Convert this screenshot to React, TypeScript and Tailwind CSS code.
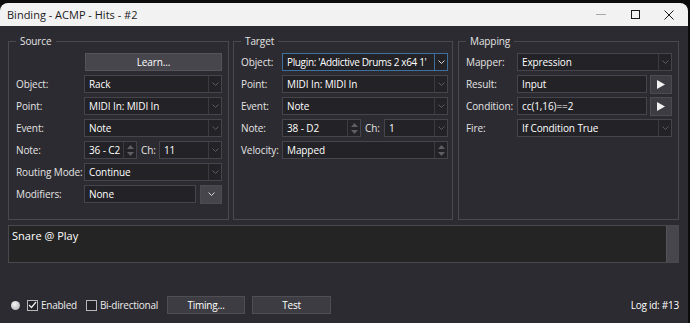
import React from "react";

const font = { fontFamily: '"Open Sans", "Noto Sans", sans-serif' };

function Chevron({ bright = false }: { bright?: boolean }) {
  return (
    <svg width="7" height="4" viewBox="0 0 7 4" className="block">
      <polyline
        points="0.5,0.5 3.5,3.5 6.5,0.5"
        fill="none"
        stroke={bright ? "#d8d8d8" : "#5c5b61"}
        strokeWidth="1"
      />
    </svg>
  );
}

function Spin() {
  return (
    <div className="flex h-full w-[13px] shrink-0 flex-col items-center justify-center gap-[3px] border-l border-[#3c3b41]">
      <svg width="7" height="4" viewBox="0 0 7 4">
        <polygon points="0,4 3.5,0 7,4" fill="#5f5e64" />
      </svg>
      <svg width="7" height="4" viewBox="0 0 7 4">
        <polygon points="0,0 3.5,4 7,0" fill="#5f5e64" />
      </svg>
    </div>
  );
}

function Combo({
  value,
  className = "",
  focused = false,
  tight = false,
}: {
  value: string;
  className?: string;
  focused?: boolean;
  tight?: boolean;
}) {
  return (
    <div
      className={`flex h-[18px] min-w-0 items-center border bg-[#232226] ${
        focused ? "border-[#3f6f9c]" : "border-[#46454b]"
      } ${className}`}
    >
      <span
        className={`min-w-0 flex-1 whitespace-nowrap pl-[4px] leading-[14px] text-white ${
          tight ? "tracking-[-0.35px]" : ""
        }`}
      >
        {value}
      </span>
      <div
        className={`flex h-full w-[13px] shrink-0 items-center justify-center border-l ${
          focused ? "border-[#3f6f9c]" : "border-[#3c3b41]"
        }`}
      >
        <Chevron bright={focused} />
      </div>
    </div>
  );
}

function SpinBox({ value, className = "" }: { value: string; className?: string }) {
  return (
    <div className={`flex h-[18px] min-w-0 items-center border border-[#46454b] bg-[#232226] ${className}`}>
      <span className="min-w-0 flex-1 whitespace-nowrap pl-[4px] leading-[14px] text-white">{value}</span>
      <Spin />
    </div>
  );
}

function TextBox({ value, className = "" }: { value: string; className?: string }) {
  return (
    <div className={`flex h-[18px] min-w-0 items-center border border-[#46454b] bg-[#232226] ${className}`}>
      <span className="whitespace-nowrap pl-[4px] leading-[14px] text-white">{value}</span>
    </div>
  );
}

function Row({
  label,
  labelW,
  children,
}: {
  label: string;
  labelW: string;
  children: React.ReactNode;
}) {
  return (
    <div className="flex h-[18px] items-center">
      <span className={`${labelW} shrink-0 whitespace-nowrap leading-[14px] text-[#e4e4e4]`}>{label}</span>
      <div className="flex min-w-0 flex-1 items-center">{children}</div>
    </div>
  );
}

function Group({
  title,
  className,
  children,
}: {
  title: string;
  className: string;
  children: React.ReactNode;
}) {
  return (
    <div className={`relative h-[179px] border border-[#4a494f] ${className}`}>
      <span className="absolute -top-[8px] left-[7px] bg-[#2c2b31] px-[4px] leading-[14px] text-[#e4e4e4]">
        {title}
      </span>
      <div className="flex flex-col gap-[4px] pt-[11px]">{children}</div>
    </div>
  );
}

function PlayBtn() {
  return (
    <div className="ml-[3px] flex h-[19px] w-[22px] shrink-0 items-center justify-center border border-[#4c4b51] bg-[#3d3c43]">
      <svg width="8" height="9" viewBox="0 0 8 9">
        <polygon points="0,0 8,4.5 0,9" fill="#f2f2f2" />
      </svg>
    </div>
  );
}

function Check({ checked }: { checked: boolean }) {
  return (
    <div className="flex h-[11px] w-[11px] items-center justify-center border border-[#b8b8bc] bg-[#232226]">
      {checked && (
        <svg width="9" height="8" viewBox="0 0 9 8">
          <polyline points="1,4 3.5,6.5 8,1" fill="none" stroke="#f0f0f0" strokeWidth="1.2" />
        </svg>
      )}
    </div>
  );
}

export default function App() {
  return (
    <div className="h-[323px] w-[690px] bg-[#0c0c0c] pt-[3px] text-[10px] tracking-[-0.1px]" style={font}>
      <div className="flex h-[320px] w-[688px] flex-col overflow-hidden rounded-t-[8px] bg-[#2c2b31]">
        {/* title bar */}
        <div className="flex h-[23px] shrink-0 items-center bg-[#f2f2f3] pl-[7px] text-[11px] tracking-normal text-[#1b1b1b]">
          <span className="flex-1 pt-[1px] leading-[16px]">Binding - ACMP - Hits - #2</span>
          <div className="flex items-center">
            <div className="flex w-[35px] justify-center">
              <div className="h-[1px] w-[10px] bg-[#a9a9a9]" />
            </div>
            <div className="flex w-[35px] justify-center">
              <div className="h-[9px] w-[9px] border border-[#1b1b1b]" />
            </div>
            <div className="flex w-[35px] justify-center pr-[4px]">
              <svg width="10" height="10" viewBox="0 0 10 10">
                <path d="M0.5 0.5 L9.5 9.5 M9.5 0.5 L0.5 9.5" stroke="#1b1b1b" strokeWidth="1" />
              </svg>
            </div>
          </div>
        </div>

        {/* body */}
        <div className="flex flex-1 flex-col px-[8px] pt-[15px]">
          <div className="flex">
            <Group title="Source" className="w-[221px] pl-[7px] pr-[6px]">
              <div className="flex h-[18px] justify-end">
                <div className="flex h-[18px] w-[137px] items-center justify-center border border-[#55545a] bg-[#47464d] leading-[14px] text-white">
                  Learn...
                </div>
              </div>
              <Row label="Object:" labelW="w-[68px]">
                <Combo value="Rack" className="flex-1" />
              </Row>
              <Row label="Point:" labelW="w-[68px]">
                <Combo value="MIDI In: MIDI In" className="flex-1" />
              </Row>
              <Row label="Event:" labelW="w-[68px]">
                <Combo value="Note" className="flex-1" />
              </Row>
              <Row label="Note:" labelW="w-[68px]">
                <SpinBox value="36 - C2" className="w-[53px]" />
                <span className="w-[22px] shrink-0 whitespace-nowrap pl-[4px] leading-[14px] text-[#e4e4e4]">Ch:</span>
                <Combo value="11" className="flex-1" />
              </Row>
              <Row label="Routing Mode:" labelW="w-[68px]">
                <Combo value="Continue" className="flex-1" />
              </Row>
              <Row label="Modifiers:" labelW="w-[68px]">
                <TextBox value="None" className="flex-1" />
                <div className="ml-[4px] flex h-[19px] w-[22px] shrink-0 items-center justify-center border border-[#4c4b51] bg-[#46454c]">
                  <Chevron bright />
                </div>
              </Row>
            </Group>

            <Group title="Target" className="ml-[4px] w-[220px] pl-[7px] pr-[4px]">
              <Row label="Object:" labelW="w-[41px]">
                <Combo value="Plugin: 'Addictive Drums 2 x64 1'" className="flex-1" focused tight />
              </Row>
              <Row label="Point:" labelW="w-[41px]">
                <Combo value="MIDI In: MIDI In" className="flex-1" />
              </Row>
              <Row label="Event:" labelW="w-[41px]">
                <Combo value="Note" className="flex-1" />
              </Row>
              <Row label="Note:" labelW="w-[41px]">
                <SpinBox value="38 - D2" className="w-[79px]" />
                <span className="w-[23px] shrink-0 whitespace-nowrap pl-[4px] leading-[14px] text-[#e4e4e4]">Ch:</span>
                <Combo value="1" className="flex-1" />
              </Row>
              <Row label="Velocity:" labelW="w-[41px]">
                <SpinBox value="Mapped" className="flex-1" />
              </Row>
            </Group>

            <Group title="Mapping" className="ml-[5px] w-[221px] pl-[7px] pr-[6px]">
              <Row label="Mapper:" labelW="w-[51px]">
                <Combo value="Expression" className="flex-1" />
              </Row>
              <Row label="Result:" labelW="w-[51px]">
                <TextBox value="Input" className="flex-1" />
                <PlayBtn />
              </Row>
              <Row label="Condition:" labelW="w-[51px]">
                <TextBox value="cc(1,16)==2" className="flex-1" />
                <PlayBtn />
              </Row>
              <Row label="Fire:" labelW="w-[51px]">
                <Combo value="If Condition True" className="flex-1" />
              </Row>
            </Group>
          </div>

          {/* notes */}
          <div className="mt-[5px] flex h-[38px] w-[671px] border border-[#4a494f] bg-[#242424]">
            <span className="flex-1 pl-[3px] pt-[2px] text-[11px] leading-[16px] tracking-normal text-white">Snare @ Play</span>
            <div className="w-[12px] border-l border-[#55545a] bg-[#47464d]" />
          </div>

          {/* bottom row */}
          <div className="mt-[33px] flex h-[18px] items-center tracking-[-0.25px]">
            <div className="ml-[3px] h-[9px] w-[9px] rounded-full bg-[radial-gradient(circle_at_40%_35%,#f4f4f4,#a9a9ad)]" />
            <div className="ml-[7px]">
              <Check checked />
            </div>
            <span className="ml-[3px] leading-[14px] text-[#ececec]">Enabled</span>
            <div className="ml-[9px]">
              <Check checked={false} />
            </div>
            <span className="ml-[3px] leading-[14px] text-[#ececec]">Bi-directional</span>
            <div className="ml-[9px] flex h-[18px] w-[78px] items-center justify-center border border-[#4f4e54] bg-[#3d3c42] leading-[14px] text-white">
              Timing...
            </div>
            <div className="ml-[7px] flex h-[18px] w-[79px] items-center justify-center border border-[#4f4e54] bg-[#3d3c42] leading-[14px] text-white">
              Test
            </div>
            <span className="ml-auto pr-[1px] leading-[14px] text-white">Log id: #13</span>
          </div>
        </div>
      </div>
    </div>
  );
}
